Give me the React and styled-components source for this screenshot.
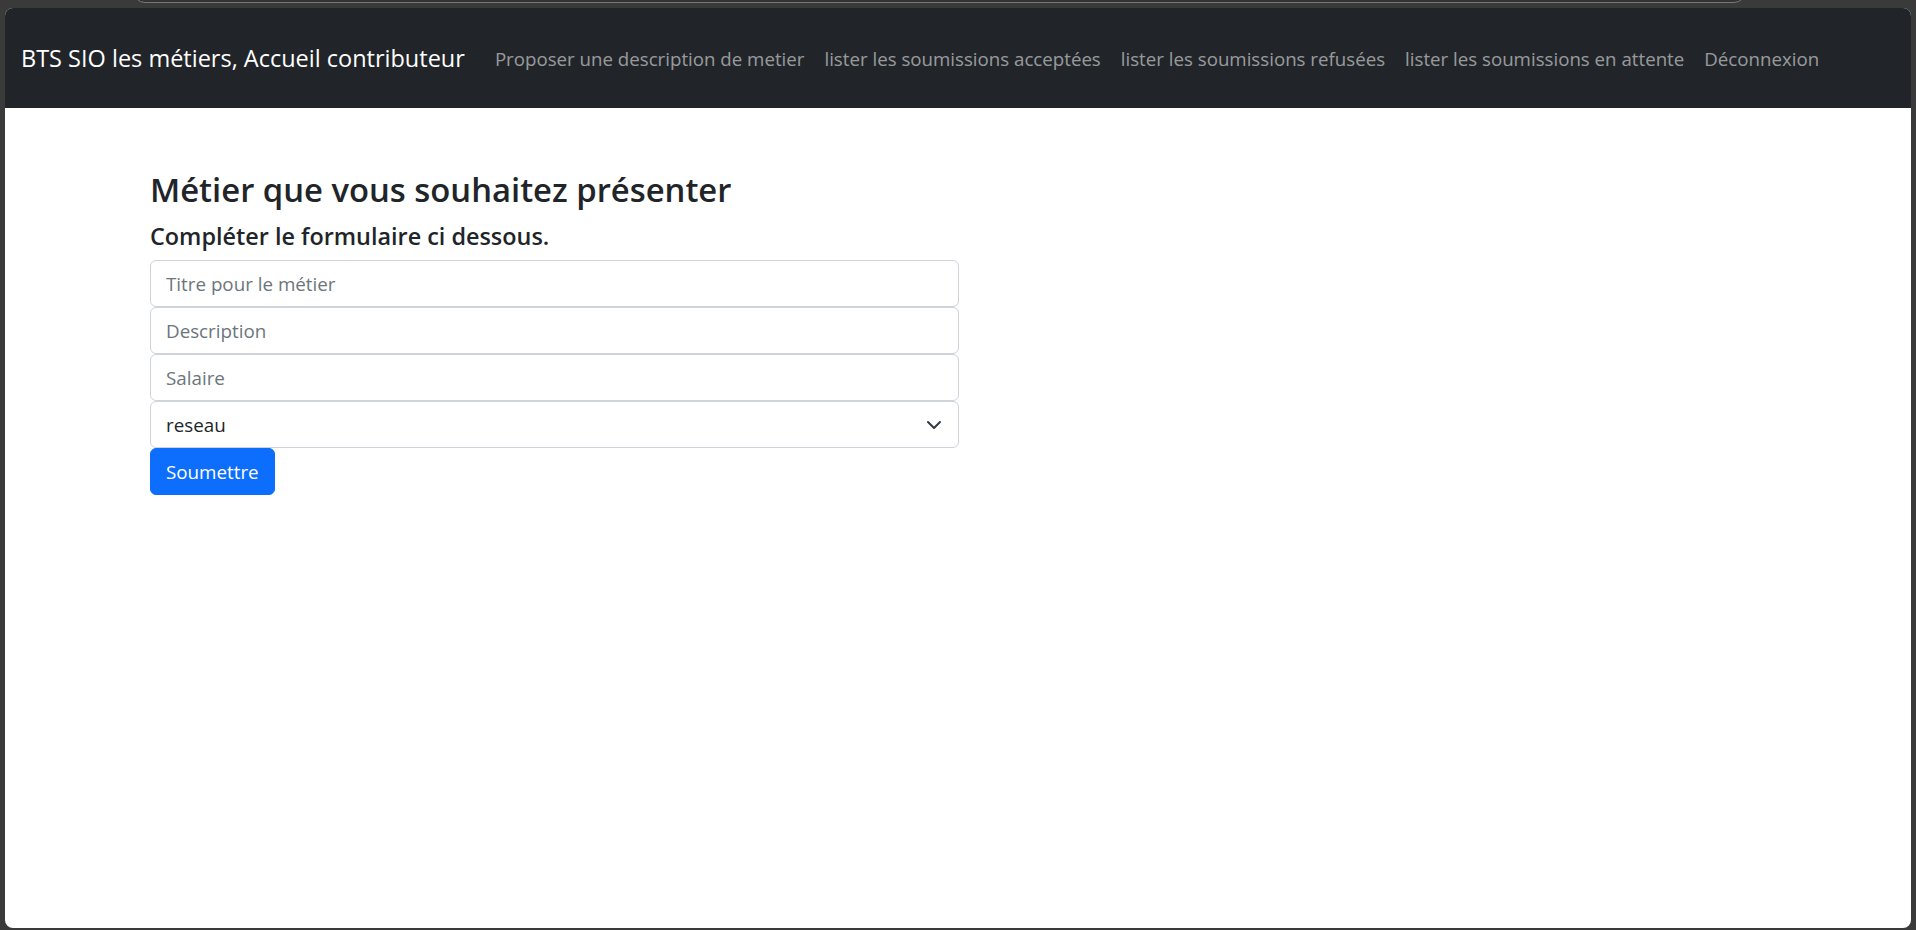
import React from 'react';
import styled, { createGlobalStyle } from 'styled-components';

const GlobalStyle = createGlobalStyle`
  html, body {
    margin: 0;
    padding: 0;
    background: #3a3a3a;
  }
  body {
    font-family: "Open Sans", "Noto Sans", sans-serif;
  }
  * { box-sizing: border-box; }
`;

const Frame = styled.div`
  height: 930px;
  display: flex;
  flex-direction: column;
  padding: 0 5px 2px 5px;
  background: #3a3a3a;
`;

const ChromeStrip = styled.div`
  height: 8px;
  overflow: hidden;
  flex-shrink: 0;
`;

const UrlBar = styled.div`
  margin: -30px 0 0 128px;
  width: 1613px;
  height: 33px;
  border: 1px solid #777;
  border-radius: 12px;
  background: #333;
`;

const Window = styled.div`
  flex: 1;
  background: #fff;
  border-radius: 8px;
  overflow: hidden;
  display: flex;
  flex-direction: column;
`;

const Navbar = styled.nav`
  height: 100px;
  background: #212529;
  display: flex;
  align-items: center;
  padding: 0 16px;
`;

const Brand = styled.a`
  color: #fff;
  font-size: 23.5px;
  text-decoration: none;
  margin-right: 20px;
  white-space: nowrap;
`;

const NavList = styled.div`
  display: flex;
  align-items: center;
`;

const NavLink = styled.a`
  color: rgba(255, 255, 255, 0.55);
  font-size: 18.7px;
  padding: 10px;
  text-decoration: none;
  white-space: nowrap;
`;

const Container = styled.main`
  padding: 61px 0 0 145px;
`;

const FormCol = styled.form`
  width: 809px;
  display: flex;
  flex-direction: column;
`;

const Title = styled.h3`
  margin: 0 0 10px;
  font-size: 32.8px;
  font-weight: 600;
  line-height: 42px;
  color: #212529;
`;

const Subtitle = styled.h5`
  margin: 0 0 9px;
  font-size: 23.4px;
  font-weight: 600;
  line-height: 30px;
  color: #212529;
`;

const Field = styled.input`
  height: 47px;
  width: 100%;
  border: 1px solid #ced4da;
  border-radius: 6px;
  padding: 0 15px;
  font-family: inherit;
  font-size: 18.8px;
  color: #212529;
  background: #fff;
  outline: none;
  &::placeholder {
    color: #6c757d;
  }
`;

const SelectBox = styled.div`
  height: 47px;
  width: 100%;
  border: 1px solid #ced4da;
  border-radius: 6px;
  padding: 0 16px 0 15px;
  display: flex;
  align-items: center;
  justify-content: space-between;
  font-size: 18.8px;
  color: #212529;
`;

const SubmitButton = styled.button`
  align-self: flex-start;
  height: 47px;
  background: #0d6efd;
  color: #fff;
  border: 1px solid #0d6efd;
  border-radius: 6px;
  font-family: inherit;
  font-size: 18.8px;
  padding: 0 15px;
  cursor: pointer;
`;

const Chevron = () => (
  <svg width="16" height="16" viewBox="0 0 16 16" fill="none">
    <path d="M2 5l6 6 6-6" stroke="#343a40" strokeWidth="2" strokeLinecap="round" strokeLinejoin="round" />
  </svg>
);

const links = [
  'Proposer une description de metier',
  'lister les soumissions acceptées',
  'lister les soumissions refusées',
  'lister les soumissions en attente',
  'Déconnexion',
];

export default function App() {
  return (
    <>
      <GlobalStyle />
      <Frame>
        <ChromeStrip>
          <UrlBar />
        </ChromeStrip>
        <Window>
          <Navbar>
            <Brand href="#">BTS SIO les métiers, Accueil contributeur</Brand>
            <NavList>
              {links.map((l) => (
                <NavLink key={l} href="#">{l}</NavLink>
              ))}
            </NavList>
          </Navbar>
          <Container>
            <FormCol onSubmit={(e) => e.preventDefault()}>
              <Title>Métier que vous souhaitez présenter</Title>
              <Subtitle>Compléter le formulaire ci dessous.</Subtitle>
              <Field placeholder="Titre pour le métier" />
              <Field placeholder="Description" />
              <Field placeholder="Salaire" />
              <SelectBox>
                <span>reseau</span>
                <Chevron />
              </SelectBox>
              <SubmitButton type="submit">Soumettre</SubmitButton>
            </FormCol>
          </Container>
        </Window>
      </Frame>
    </>
  );
}
